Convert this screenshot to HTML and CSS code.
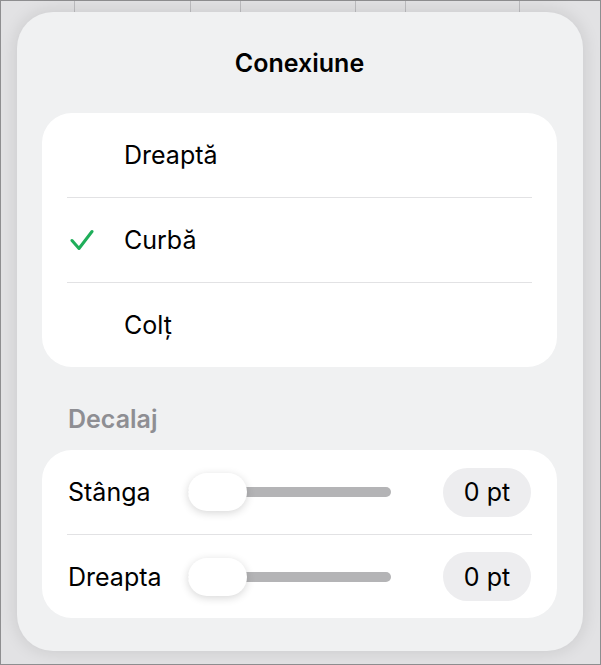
FILE: index.html
```html
<!DOCTYPE html>
<html lang="ro">
<head>
<meta charset="UTF-8">
<title>Conexiune</title>
<link rel="stylesheet" href="styles.css">
</head>
<body>
<div class="screen">
    <div class="popover">
        <div class="title">Conexiune</div>

        <div class="card">
            <div class="option">
                <span class="check"></span>
                <span class="option-label">Dreaptă</span>
            </div>
            <div class="sep"></div>
            <div class="option">
                <span class="check">
                    <svg width="24" height="24" viewBox="0 0 24 24"><polyline points="2,12.5 9,20.5 22,3.5" fill="none" stroke="#1fae5a" stroke-width="3" stroke-linecap="round" stroke-linejoin="round"/></svg>
                </span>
                <span class="option-label">Curbă</span>
            </div>
            <div class="sep"></div>
            <div class="option">
                <span class="check"></span>
                <span class="option-label">Colț</span>
            </div>
        </div>

        <div class="section-label">Decalaj</div>

        <div class="card">
            <div class="slider-row">
                <span class="row-label">Stânga</span>
                <div class="slider">
                    <div class="track"></div>
                    <div class="thumb"></div>
                </div>
                <span class="value">0 pt</span>
            </div>
            <div class="sep"></div>
            <div class="slider-row">
                <span class="row-label">Dreapta</span>
                <div class="slider">
                    <div class="track"></div>
                    <div class="thumb"></div>
                </div>
                <span class="value">0 pt</span>
            </div>
        </div>
    </div>
</div>
</body>
</html>
```

FILE: styles.css
```css
body {
    margin: 0;
    font-family: Inter, "Noto Sans", sans-serif;
    color: #000;
}
.screen {
    width: 601px;
    height: 665px;
    box-sizing: border-box;
    border: 1px solid #8e8e90;
    padding: 11px 17px 0 16px;
    background-color: #e2e2e4;
    background-image:
        linear-gradient(#bdbdc0, #bdbdc0),
        linear-gradient(#bdbdc0, #bdbdc0),
        linear-gradient(#bdbdc0, #bdbdc0),
        linear-gradient(#bdbdc0, #bdbdc0),
        linear-gradient(#bdbdc0, #bdbdc0),
        linear-gradient(#bdbdc0, #bdbdc0);
    background-repeat: no-repeat;
    background-size: 1px 12px;
    background-position: 73px 0, 189px 0, 239px 0, 354px 0, 404px 0, 518px 0;
}
.popover {
    background: #f0f1f2;
    border-radius: 36px;
    box-shadow: 0 0 18px rgba(0, 0, 0, 0.12);
    padding: 0 26px 33px 25px;
}
.title {
    height: 101px;
    display: flex;
    align-items: center;
    justify-content: center;
    font-size: 25px;
    font-weight: 600;
}
.card {
    background: #fff;
    border-radius: 30px;
}
.sep {
    height: 1px;
    background: #e2e2e4;
    margin: 0 25px;
}
.option {
    height: 84px;
    display: flex;
    align-items: center;
    padding-left: 28px;
    font-size: 25px;
}
.check {
    width: 24px;
    height: 24px;
    margin-right: 30px;
}
.section-label {
    padding: 40px 0 19px 26px;
    line-height: 24px;
    font-size: 25px;
    font-weight: 600;
    color: #8e8e93;
}
.slider-row {
    height: 84px;
    display: grid;
    grid-template-columns: 120px 203px 1fr;
    align-items: center;
    padding: 0 26px;
    font-size: 25px;
}
.slider-row + .sep + .slider-row {
    height: 83px;
}
.slider {
    position: relative;
    height: 38px;
    display: flex;
    align-items: center;
}
.track {
    width: 100%;
    height: 10px;
    border-radius: 5px;
    background: #b4b4b6;
}
.thumb {
    position: absolute;
    left: 0;
    top: 0;
    width: 59px;
    height: 38px;
    border-radius: 19px;
    background: #fff;
    box-shadow: 0 2px 9px rgba(0, 0, 0, 0.16);
}
.value {
    justify-self: end;
    width: 88px;
    height: 49px;
    border-radius: 25px;
    background: #ededef;
    display: flex;
    align-items: center;
    justify-content: center;
}
```
